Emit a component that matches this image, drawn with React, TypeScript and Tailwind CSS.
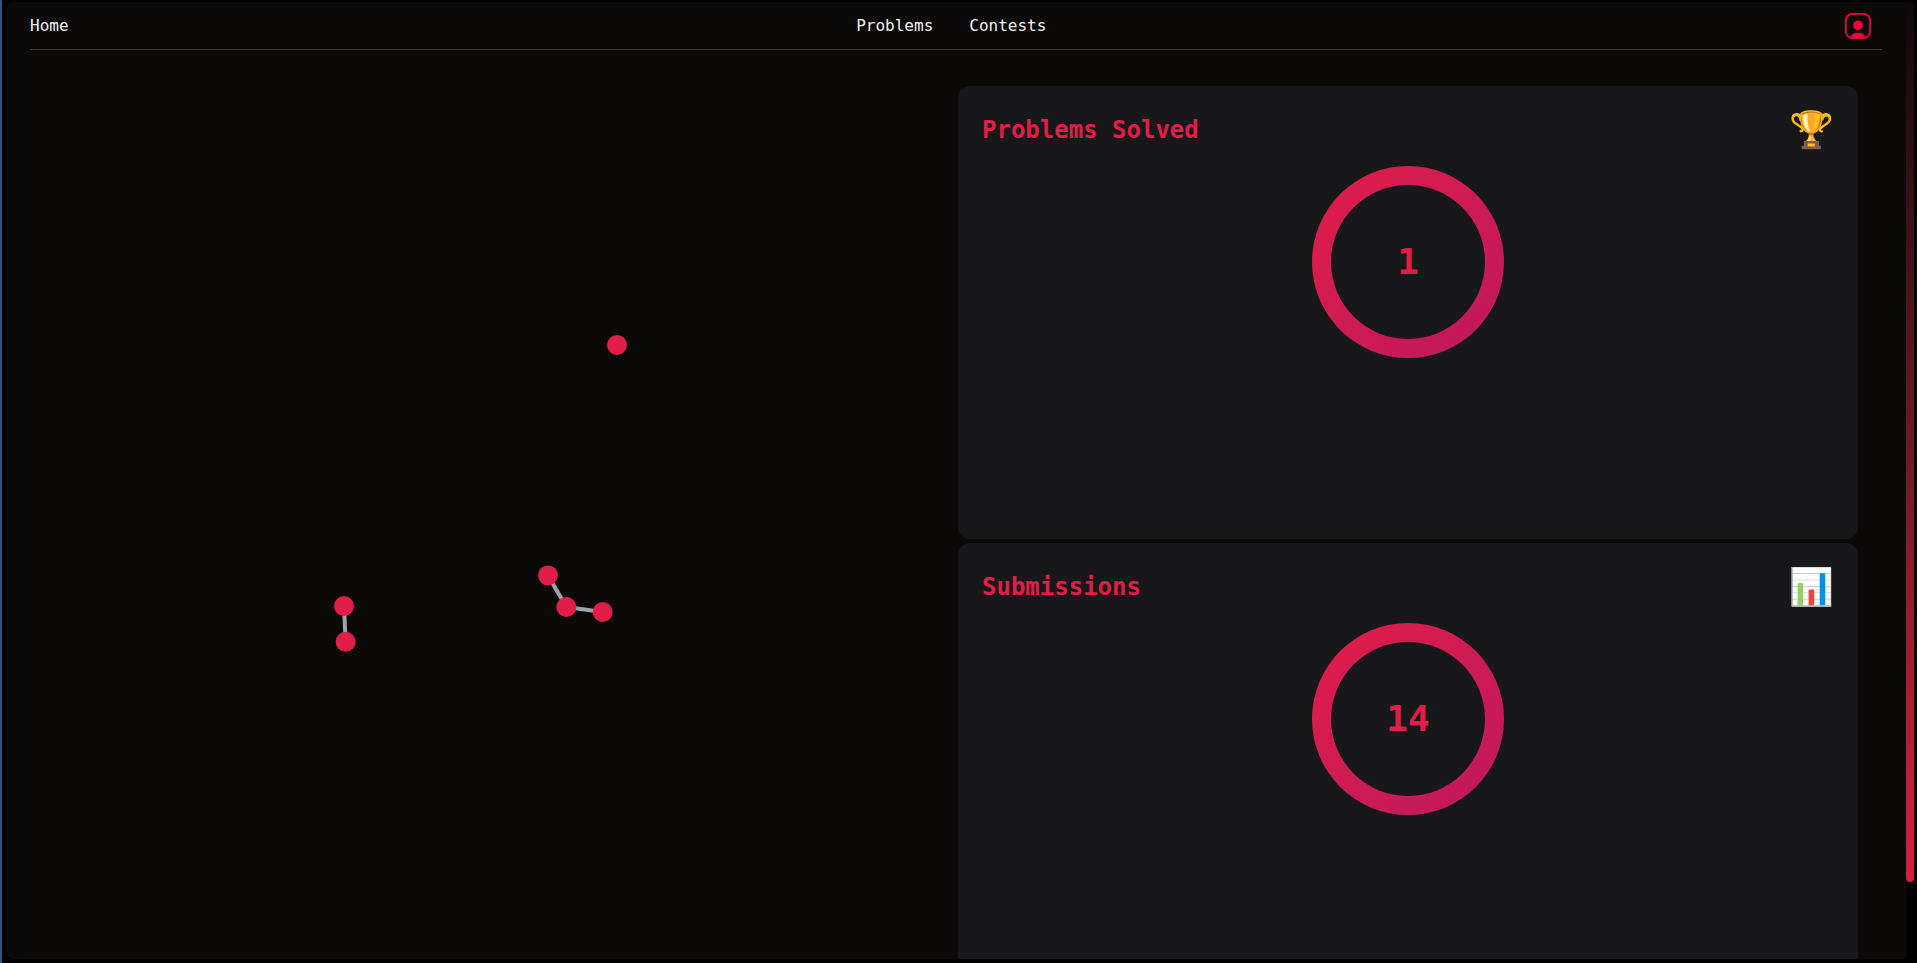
import React from "react";

type Point = { x: number; y: number };

const nodes: Point[] = [
  { x: 617, y: 345 },
  { x: 548, y: 575.4 },
  { x: 566.4, y: 607 },
  { x: 602.7, y: 612 },
  { x: 344, y: 606 },
  { x: 345.6, y: 641.7 },
];

const edges: [number, number][] = [
  [1, 2],
  [2, 3],
  [4, 5],
];

function Graph() {
  return (
    <svg viewBox="54 86 900 872" className="w-full" aria-hidden="true">
      {edges.map(([a, b]) => (
        <line
          key={a}
          x1={nodes[a].x}
          y1={nodes[a].y}
          x2={nodes[b].x}
          y2={nodes[b].y}
          stroke="#9ca3af"
          strokeWidth="4"
        />
      ))}
      {nodes.map((n) => (
        <circle key={n.x} cx={n.x} cy={n.y} r="10" fill="#e11d48" />
      ))}
    </svg>
  );
}

function StatCard({ title, icon, value }: { title: string; icon: string; value: number }) {
  return (
    <section className="h-[453px] rounded-xl bg-zinc-900 p-6">
      <div className="flex items-center justify-between">
        <h2 className="text-2xl font-bold">{title}</h2>
        <span className="text-4xl">{icon}</span>
      </div>
      <div className="mx-auto mt-4 flex size-48 items-center justify-center rounded-full bg-linear-to-br from-[#e11d48] to-[#be185d] p-[19px]">
        <div className="flex size-full items-center justify-center rounded-full bg-zinc-900 text-4xl font-bold">
          {value}
        </div>
      </div>
    </section>
  );
}

export default function App() {
  return (
    <div className="flex h-screen bg-black pt-0.5 pr-[3px] pb-1 font-['DejaVu_Sans_Mono',monospace] text-[#e11d48]">
      <div className="-mt-0.5 -mb-1 mr-1 w-0.5 bg-[#2b5a80]" />
      <div className="min-w-0 grow overflow-hidden rounded-l-lg bg-[#0c0a09]">
        <header className="mx-6 flex h-12 items-center justify-between border-b border-[#3a3a38] text-[#f2f2f2]">
          <a href="#home">Home</a>
          <nav className="flex gap-9">
            <a href="#problems">Problems</a>
            <a href="#contests">Contests</a>
          </nav>
          <button aria-label="Profile" className="flex w-12 justify-center">
            <svg viewBox="0 0 26 26" className="size-[26px]" fill="none">
              <rect x="0.900" y="0.900" width="24.200" height="24.200" rx="6.500" stroke="#f0003c" strokeWidth="1.800" />
              <circle cx="13" cy="12.300" r="4.900" fill="#f0003c" />
              <path d="M5.300 25c.7-3.500 3.700-5.300 7.700-5.300s7 1.800 7.700 5.300z" fill="#f0003c" />
            </svg>
          </button>
        </header>
        <main className="grid grid-cols-2 gap-1 px-12 pt-9">
          <Graph />
          <div className="flex flex-col gap-1">
            <StatCard title="Problems Solved" icon="🏆" value={1} />
            <StatCard title="Submissions" icon="📊" value={14} />
          </div>
        </main>
      </div>
      <div className="w-2">
        <div className="h-[92%] rounded-full bg-linear-to-b from-[#120809] to-[#d81f3c]" />
      </div>
    </div>
  );
}
